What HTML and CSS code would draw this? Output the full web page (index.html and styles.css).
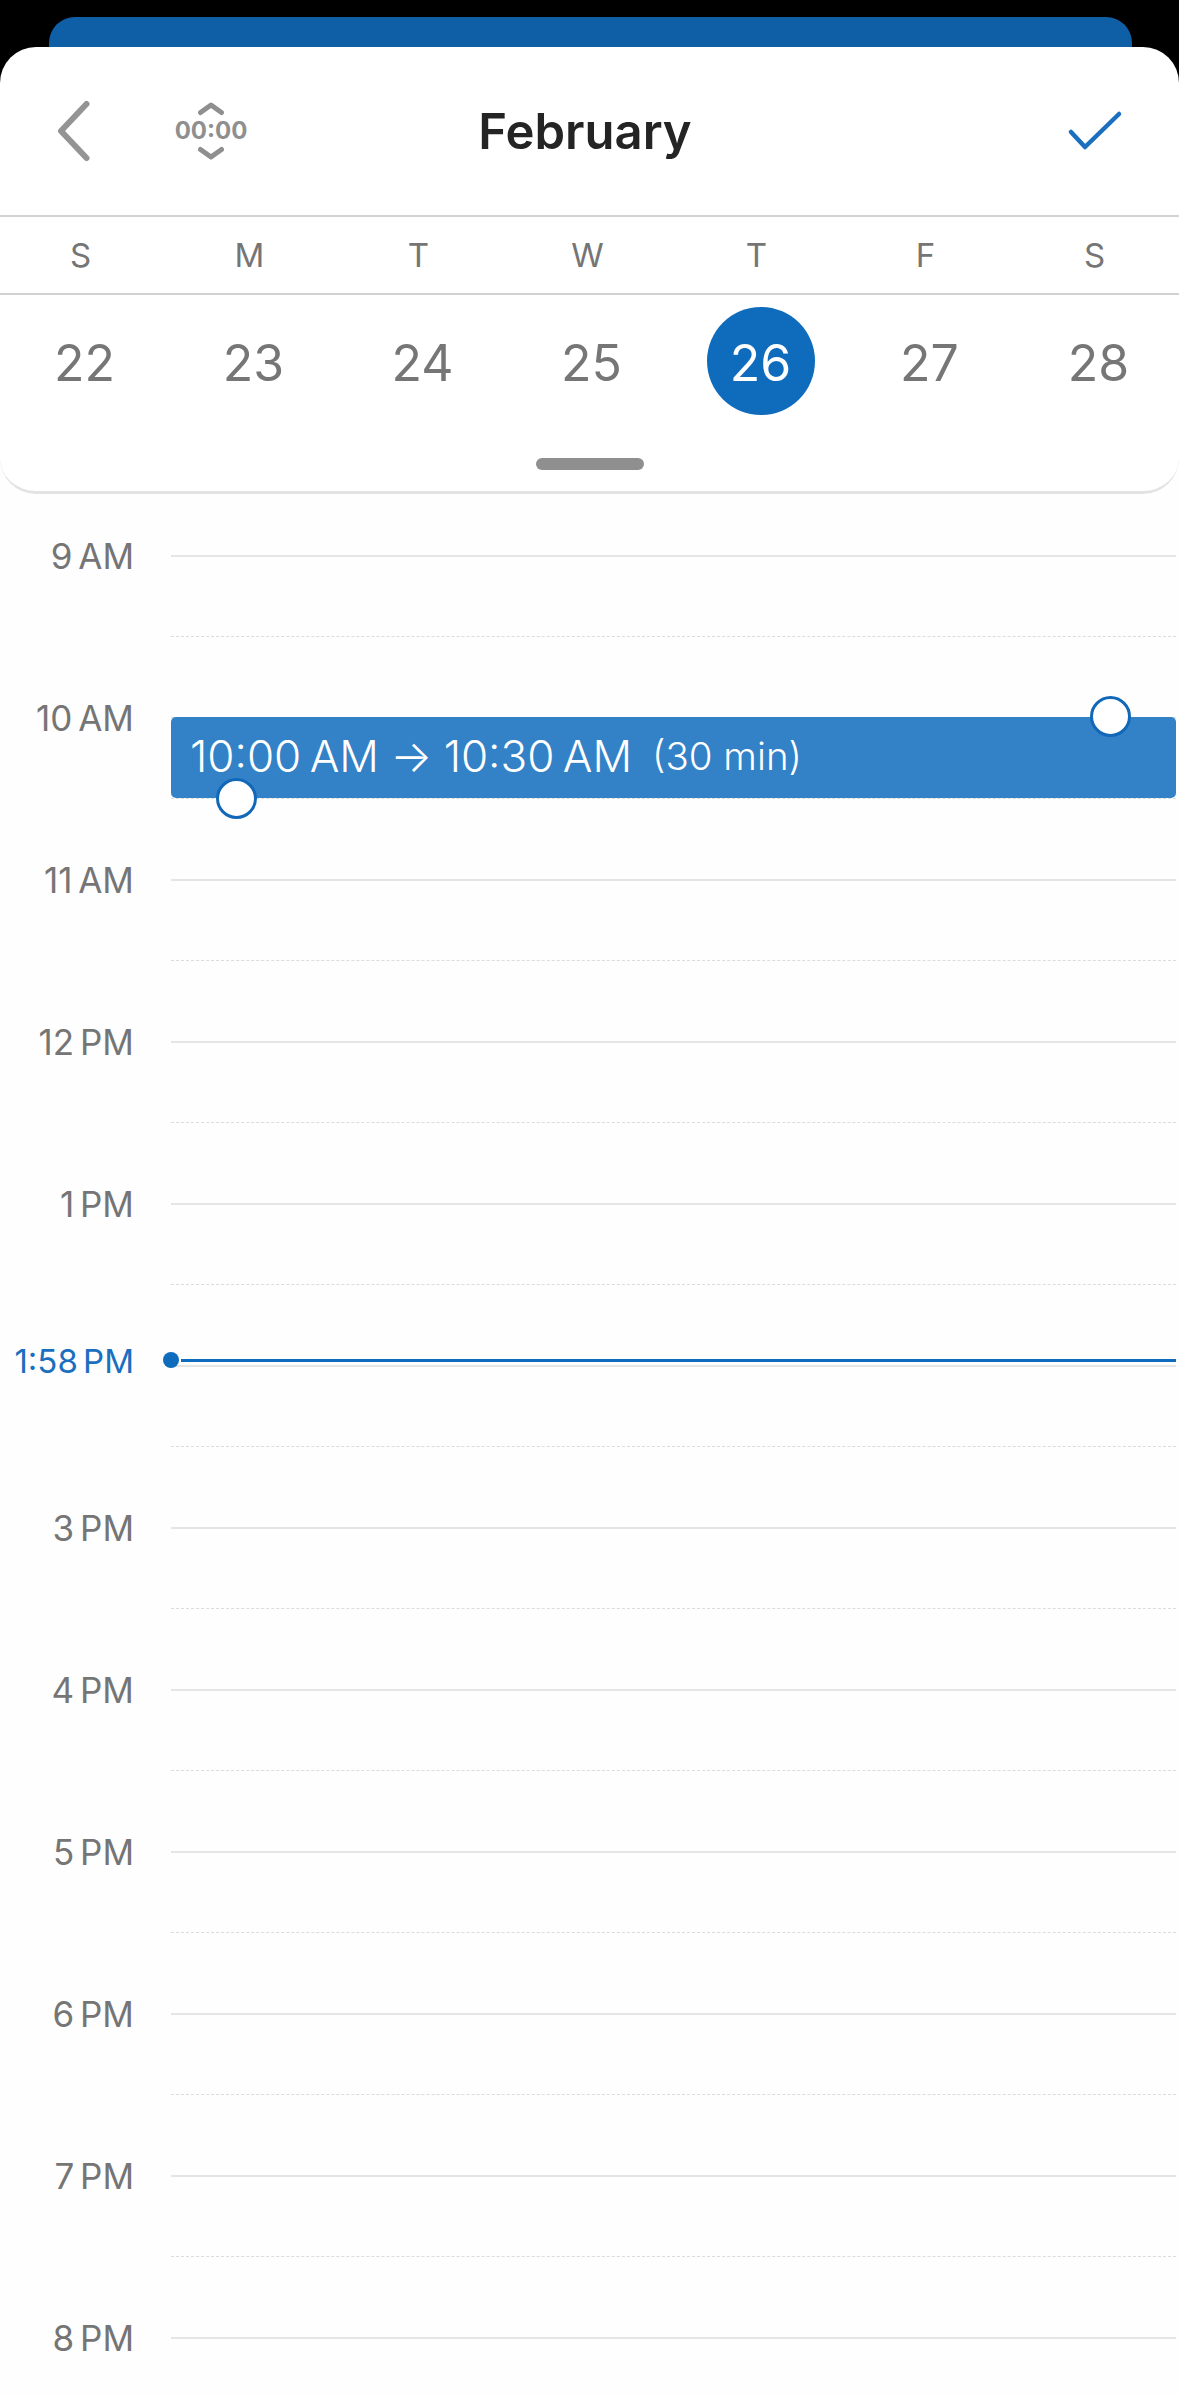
FILE: index.html
```html
<!DOCTYPE html>
<html lang="en">
  <head>
    <meta charset="UTF-8" />
    <meta name="viewport" content="width=device-width, initial-scale=1.0" />
    <title>February</title>
    <link rel="stylesheet" href="styles.css">
  </head>
  <body>
    <div class="backdrop"><div class="tab"></div></div>
    <div class="card">
      <div class="header">
        <div class="header-left">
          <svg class="back" width="45" height="64" viewBox="0 0 45 64">
            <polyline points="39.5,5 14,32 39.5,59" />
          </svg>
          <div class="time-icon">
            <svg width="30" height="14" viewBox="0 0 30 14"><polyline points="4.5,10.5 15,3 25.5,10.5" /></svg>
            <span class="time-text">00:00</span>
            <svg width="30" height="14" viewBox="0 0 30 14"><polyline points="4.5,3.5 15,11 25.5,3.5" /></svg>
          </div>
        </div>
        <div class="title">February</div>
        <div class="header-right">
          <svg class="check" width="56" height="42" viewBox="0 0 56 42">
            <polyline points="4,22 18,37 52,4" />
          </svg>
        </div>
      </div>
      <div class="weekdays">
        <span>S</span><span>M</span><span>T</span><span>W</span><span>T</span><span>F</span><span>S</span>
      </div>
      <div class="dates">
        <span>22</span><span>23</span><span>24</span><span>25</span>
        <span class="today">26</span>
        <span>27</span><span>28</span>
      </div>
      <div class="grabber"></div>
    </div>

    <div class="schedule">
      <div class="hour"><div class="label">9 AM</div><div class="track"><div class="half"></div></div></div>
      <div class="hour"><div class="label">10 AM</div><div class="track"><div class="half"></div></div></div>
      <div class="hour"><div class="label">11 AM</div><div class="track"><div class="half"></div></div></div>
      <div class="hour"><div class="label">12 PM</div><div class="track"><div class="half"></div></div></div>
      <div class="hour"><div class="label">1 PM</div><div class="track"><div class="half"></div></div></div>
      <div class="hour"><div class="label label-now">1:58 PM</div><div class="track"><div class="half"></div></div></div>
      <div class="hour"><div class="label">3 PM</div><div class="track"><div class="half"></div></div></div>
      <div class="hour"><div class="label">4 PM</div><div class="track"><div class="half"></div></div></div>
      <div class="hour"><div class="label">5 PM</div><div class="track"><div class="half"></div></div></div>
      <div class="hour"><div class="label">6 PM</div><div class="track"><div class="half"></div></div></div>
      <div class="hour"><div class="label">7 PM</div><div class="track"><div class="half"></div></div></div>
      <div class="hour"><div class="label">8 PM</div><div class="track"><div class="half"></div></div></div>

      <div class="event">
        <span class="event-time">10:00 AM <span class="arrow">→</span> 10:30 AM</span>
        <span class="event-length">(30 min)</span>
        <div class="handle handle-top"></div>
        <div class="handle handle-bottom"></div>
      </div>

      <div class="now">
        <div class="now-dot"></div>
        <div class="now-line"></div>
      </div>
    </div>
  </body>
</html>
```

FILE: styles.css
```css
* {
  margin: 0;
  padding: 0;
  box-sizing: border-box;
}
html,
body {
  height: 2396px;
  overflow: hidden;
}
body {
  background-color: #fefefe;
  font-family: Inter, "Liberation Sans", sans-serif;
}
.backdrop {
  height: 90px;
  padding: 17px 47px 0 49px;
  background-color: #000000;
}
.tab {
  height: 73px;
  background-color: #0e5fa6;
  border-radius: 26px 26px 0 0;
}
.card {
  height: 447px;
  margin-top: -43px;
  background-color: #ffffff;
  border-bottom: 3px solid #e3e3e3;
  border-radius: 36px;
}

/* header */
.header {
  display: grid;
  grid-template-columns: 1fr auto 1fr;
  align-items: center;
  height: 170px;
  padding: 0 56px 0 47px;
  border-bottom: 2px solid #d2d2d2;
}
.header-left {
  display: flex;
  align-items: center;
  gap: 83px;
}
.header-right {
  display: flex;
  justify-content: flex-end;
}
svg polyline {
  fill: none;
  stroke-linecap: round;
  stroke-linejoin: round;
}
.back polyline {
  stroke: #949494;
  stroke-width: 6;
}
.time-icon {
  display: flex;
  flex-direction: column;
  align-items: center;
  gap: 3px;
  width: 72px;
}
.time-icon polyline {
  stroke: #8f8f8f;
  stroke-width: 5;
}
.time-text {
  font-size: 24px;
  line-height: 24px;
  font-weight: 700;
  color: #8f8f8f;
}
.title {
  font-size: 49px;
  font-weight: 600;
  color: #242424;
}
.check polyline {
  stroke: #1a6fbf;
  stroke-width: 4.5;
}

/* week strip */
.weekdays,
.dates {
  display: grid;
  grid-template-columns: repeat(7, 169px);
  justify-items: center;
  align-items: center;
}
.weekdays {
  height: 78px;
  margin-left: -4px;
  font-size: 33px;
  color: #757575;
  border-bottom: 2px solid #d2d2d2;
  width: 1183px;
}
.dates {
  height: 108px;
  margin-top: 12px;
  font-size: 50px;
  color: #767676;
}
.dates span {
  padding-top: 4px;
}
.today {
  display: flex;
  align-items: center;
  justify-content: center;
  width: 108px;
  height: 108px;
  border-radius: 50%;
  background-color: #0f6cbd;
  color: #ffffff;
}
.grabber {
  width: 108px;
  height: 12px;
  margin: 43px auto 0;
  border-radius: 6px;
  background-color: #8f8f8f;
}

/* time grid */
.schedule {
  position: relative;
  margin-top: 61px;
}
.hour {
  display: flex;
  height: 162px;
}
.label {
  width: 171px;
  height: 42px;
  margin-top: -20px;
  padding-right: 37px;
  font-size: 35px;
  line-height: 42px;
  text-align: right;
  word-spacing: -4px;
  color: #757575;
}
.label-now {
  margin-top: -25px;
  font-size: 33px;
  color: #1a6fbf;
}
.track {
  flex: 1;
  margin-right: 3px;
  border-top: 2px solid #e5e5e5;
}
.half {
  height: 80px;
  border-bottom: 1px dashed #dcdcdc;
}

/* the selected slot and its drag handles */
.event {
  position: absolute;
  top: 162px;
  left: 171px;
  right: 3px;
  height: 81px;
  display: flex;
  align-items: center;
  gap: 20px;
  padding: 0 0 3px 19px;
  border-radius: 5px;
  background-color: #3381c6;
  color: #ffffff;
}
.event-time {
  font-size: 44px;
  font-weight: 300;
  word-spacing: -4px;
}
.arrow {
  margin: 0 3px;
}
.event-length {
  font-size: 38.5px;
  font-weight: 300;
}
.handle {
  position: absolute;
  width: 41px;
  height: 41px;
  border: 3px solid #1268b8;
  border-radius: 50%;
  background-color: #ffffff;
}
.handle-top {
  top: -21px;
  right: 45px;
}
.handle-bottom {
  bottom: -21px;
  left: 45px;
}

/* current time marker */
.now {
  position: absolute;
  top: 797px;
  left: 163px;
  right: 3px;
  display: flex;
  align-items: center;
  gap: 2px;
}
.now-dot {
  width: 16px;
  height: 16px;
  border-radius: 50%;
  background-color: #0f6cbd;
}
.now-line {
  flex: 1;
  height: 3px;
  background-color: #0f6cbd;
}
```
